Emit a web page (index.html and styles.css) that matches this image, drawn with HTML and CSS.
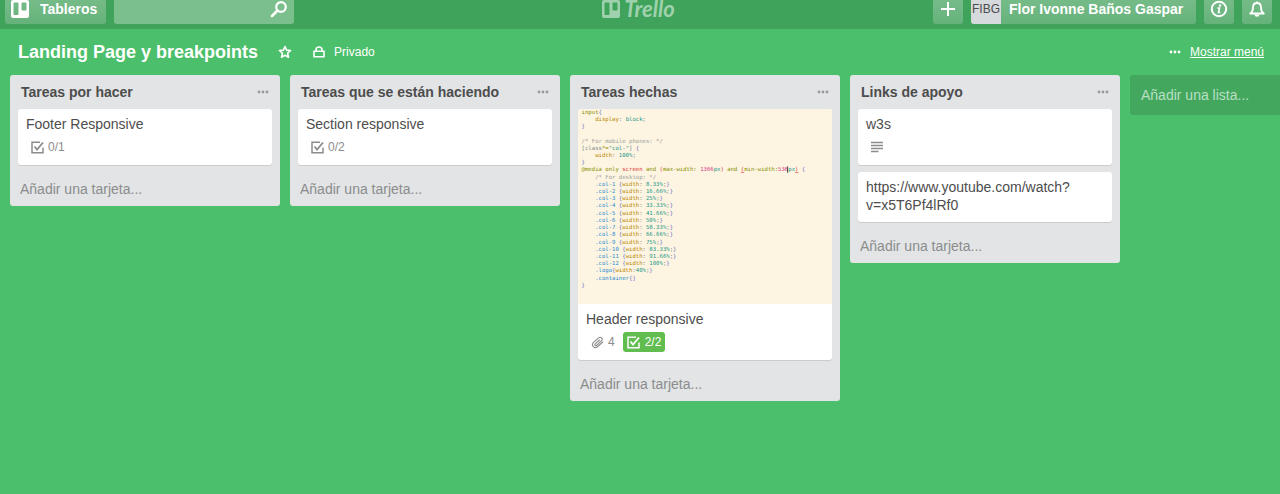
FILE: index.html
```html
<!DOCTYPE html>
<html lang="es">
<head>
<meta charset="utf-8">
<meta name="viewport" content="width=device-width, initial-scale=1">
<title>Landing Page y breakpoints | Trello</title>
<link rel="stylesheet" href="styles.css">
</head>
<body>
<svg class="symbols" aria-hidden="true">
  <symbol id="i-logo" viewBox="0 0 18 18"><path fill-rule="evenodd" d="M2 0h14a2 2 0 0 1 2 2v14a2 2 0 0 1-2 2H2a2 2 0 0 1-2-2V2a2 2 0 0 1 2-2zM3.500 2.500a1 1 0 0 0-1 1v10.500a1 1 0 0 0 1 1h3a1 1 0 0 0 1-1V3.500a1 1 0 0 0-1-1zM11.500 2.500a1 1 0 0 0-1 1v6a1 1 0 0 0 1 1h3a1 1 0 0 0 1-1v-6a1 1 0 0 0-1-1z"/></symbol>
  <symbol id="i-check" viewBox="0 0 13 13"><path d="M9 1.200H1v10.600h11V6.500" fill="none" stroke="currentColor" stroke-width="1.500"/><path d="M3.500 5.500 6 8.500 12 1.500" fill="none" stroke="currentColor" stroke-width="1.800"/></symbol>
  <symbol id="i-more" viewBox="0 0 12 4"><circle cx="2" cy="2" r="1.400"/><circle cx="6" cy="2" r="1.400"/><circle cx="10" cy="2" r="1.400"/></symbol>
</svg>

<header class="topbar">
  <div class="topbar-group">
    <button class="top-button boards-button" type="button"><svg class="icon-18" aria-hidden="true"><use href="#i-logo"/></svg>Tableros</button>
    <label class="search">
      <input class="search-input" type="text" aria-label="Buscar">
      <svg class="icon-18" viewBox="0 0 18 18" aria-hidden="true"><circle cx="11" cy="7" r="4.800" fill="none" stroke="currentColor" stroke-width="2.200"/><path d="M7.500 10.500 2 16" fill="none" stroke="currentColor" stroke-width="2.600" stroke-linecap="round"/></svg>
    </label>
  </div>
  <a class="brand" href="#"><svg class="icon-18" aria-hidden="true"><use href="#i-logo"/></svg><span>Trello</span></a>
  <div class="topbar-group topbar-right">
    <button class="top-button square" type="button" aria-label="Crear"><svg class="icon-18" viewBox="0 0 18 18" aria-hidden="true"><path d="M9 2v14M2 9h14" stroke="currentColor" stroke-width="2"/></svg></button>
    <button class="top-button member" type="button"><span class="avatar">FIBG</span><span class="member-name">Flor Ivonne Baños Gaspar</span></button>
    <button class="top-button square" type="button" aria-label="Información"><svg class="icon-18" viewBox="0 0 18 18" aria-hidden="true"><circle cx="9" cy="9" r="7.200" fill="none" stroke="currentColor" stroke-width="2"/><circle cx="10" cy="5.500" r="1.200" fill="currentColor"/><path d="M7.500 8h2l-1 4.500h1.800" fill="none" stroke="currentColor" stroke-width="1.600"/></svg></button>
    <button class="top-button square" type="button" aria-label="Notificaciones"><svg class="icon-18" viewBox="0 0 18 18" aria-hidden="true"><path d="M9 1.500v1.500M9 3C6.200 3 5 5 5 7.500 5 11 3.800 12.500 2.200 13.500h13.600C14.200 12.500 13 11 13 7.500 13 5 11.800 3 9 3z" fill="none" stroke="currentColor" stroke-width="1.800" stroke-linejoin="round"/><path d="M6.500 14.500a2.500 2.300 0 0 0 5 0z" fill="currentColor"/></svg></button>
  </div>
</header>

<main>
  <div class="board-header">
    <h1 class="board-title">Landing Page y breakpoints</h1>
    <button class="board-button star" type="button" aria-label="Marcar como favorito"><svg class="icon-14" viewBox="0 0 14 14" aria-hidden="true"><path d="m7 1.500 1.600 3.600 4 .4-3 2.700.9 4L7 10.200l-3.500 2 .9-4-3-2.700 4-.4z" fill="none" stroke="currentColor" stroke-width="1.600" stroke-linejoin="round"/></svg></button>
    <button class="board-button privacy" type="button"><svg class="icon-14" viewBox="0 0 14 14" aria-hidden="true"><path d="M2 6.200h10v5.600H2zM4 6V4.800a3 2.800 0 0 1 6 0V6" fill="none" stroke="currentColor" stroke-width="1.600"/></svg>Privado</button>
    <a class="board-button menu-link" href="#"><svg class="icon-more" aria-hidden="true"><use href="#i-more"/></svg><span>Mostrar menú</span></a>
  </div>

  <div class="lists">
    <section class="list">
      <header class="list-header"><h2>Tareas por hacer</h2><button class="list-menu" type="button" aria-label="Acciones de la lista"><svg class="icon-more" aria-hidden="true"><use href="#i-more"/></svg></button></header>
      <div class="cards">
        <article class="card"><p>Footer Responsive</p>
          <div class="badges"><span class="badge"><svg class="icon-13" aria-hidden="true"><use href="#i-check"/></svg>0/1</span></div>
        </article>
      </div>
      <button class="add-card" type="button">Añadir una tarjeta...</button>
    </section>

    <section class="list">
      <header class="list-header"><h2>Tareas que se están haciendo</h2><button class="list-menu" type="button" aria-label="Acciones de la lista"><svg class="icon-more" aria-hidden="true"><use href="#i-more"/></svg></button></header>
      <div class="cards">
        <article class="card"><p>Section responsive</p>
          <div class="badges"><span class="badge"><svg class="icon-13" aria-hidden="true"><use href="#i-check"/></svg>0/2</span></div>
        </article>
      </div>
      <button class="add-card" type="button">Añadir una tarjeta...</button>
    </section>

    <section class="list">
      <header class="list-header"><h2>Tareas hechas</h2><button class="list-menu" type="button" aria-label="Acciones de la lista"><svg class="icon-more" aria-hidden="true"><use href="#i-more"/></svg></button></header>
      <div class="cards">
        <article class="card">
          <svg class="cover" viewBox="0 0 1127 866" role="img" aria-label="Código CSS">
            <text x="16" y="21"><tspan class="c-green">input</tspan><tspan class="c-violet">{</tspan></text>
            <text x="76" y="53"><tspan class="c-gold">display</tspan>: <tspan class="c-cyan">block</tspan>;</text>
            <text x="16" y="85" class="c-violet">}</text>
            <text x="16" y="149" class="c-gray">/* For mobile phones: */</text>
            <text x="16" y="181">[class<tspan class="c-green">*=</tspan><tspan class="c-cyan">"col-"</tspan>] <tspan class="c-violet">{</tspan></text>
            <text x="76" y="213"><tspan class="c-gold">width</tspan>: <tspan class="c-cyan">100%</tspan>;</text>
            <text x="16" y="245" class="c-violet">}</text>
            <text x="16" y="277" class="c-green">@media only <tspan class="c-red">screen</tspan> and <tspan class="c-red">(</tspan>max-width: <tspan class="c-pink">1366</tspan><tspan class="c-cyan">px</tspan><tspan class="c-red">)</tspan> and <tspan class="c-red underline">(</tspan>min-width:<tspan class="c-pink">536</tspan><tspan class="c-cyan">px</tspan><tspan class="c-red underline">)</tspan> <tspan class="c-violet">{</tspan></text>
            <path d="M930 255v28" stroke="#333" stroke-width="4"/>
            <text x="76" y="309" class="c-gray">/* For desktop: */</text>
            <text x="76" y="341"><tspan class="c-blue">.col-1</tspan> <tspan class="c-violet">{</tspan><tspan class="c-gold">width</tspan>: <tspan class="c-cyan">8.33%</tspan>;<tspan class="c-violet">}</tspan></text>
            <text x="76" y="373"><tspan class="c-blue">.col-2</tspan> <tspan class="c-violet">{</tspan><tspan class="c-gold">width</tspan>: <tspan class="c-cyan">16.66%</tspan>;<tspan class="c-violet">}</tspan></text>
            <text x="76" y="405"><tspan class="c-blue">.col-3</tspan> <tspan class="c-violet">{</tspan><tspan class="c-gold">width</tspan>: <tspan class="c-cyan">25%</tspan>;<tspan class="c-violet">}</tspan></text>
            <text x="76" y="437"><tspan class="c-blue">.col-4</tspan> <tspan class="c-violet">{</tspan><tspan class="c-gold">width</tspan>: <tspan class="c-cyan">33.33%</tspan>;<tspan class="c-violet">}</tspan></text>
            <text x="76" y="469"><tspan class="c-blue">.col-5</tspan> <tspan class="c-violet">{</tspan><tspan class="c-gold">width</tspan>: <tspan class="c-cyan">41.66%</tspan>;<tspan class="c-violet">}</tspan></text>
            <text x="76" y="501"><tspan class="c-blue">.col-6</tspan> <tspan class="c-violet">{</tspan><tspan class="c-gold">width</tspan>: <tspan class="c-cyan">50%</tspan>;<tspan class="c-violet">}</tspan></text>
            <text x="76" y="533"><tspan class="c-blue">.col-7</tspan> <tspan class="c-violet">{</tspan><tspan class="c-gold">width</tspan>: <tspan class="c-cyan">58.33%</tspan>;<tspan class="c-violet">}</tspan></text>
            <text x="76" y="565"><tspan class="c-blue">.col-8</tspan> <tspan class="c-violet">{</tspan><tspan class="c-gold">width</tspan>: <tspan class="c-cyan">66.66%</tspan>;<tspan class="c-violet">}</tspan></text>
            <text x="76" y="597"><tspan class="c-blue">.col-9</tspan> <tspan class="c-violet">{</tspan><tspan class="c-gold">width</tspan>: <tspan class="c-cyan">75%</tspan>;<tspan class="c-violet">}</tspan></text>
            <text x="76" y="629"><tspan class="c-blue">.col-10</tspan> <tspan class="c-violet">{</tspan><tspan class="c-gold">width</tspan>: <tspan class="c-cyan">83.33%</tspan>;<tspan class="c-violet">}</tspan></text>
            <text x="76" y="661"><tspan class="c-blue">.col-11</tspan> <tspan class="c-violet">{</tspan><tspan class="c-gold">width</tspan>: <tspan class="c-cyan">91.66%</tspan>;<tspan class="c-violet">}</tspan></text>
            <text x="76" y="693"><tspan class="c-blue">.col-12</tspan> <tspan class="c-violet">{</tspan><tspan class="c-gold">width</tspan>: <tspan class="c-cyan">100%</tspan>;<tspan class="c-violet">}</tspan></text>
            <text x="76" y="725"><tspan class="c-blue">.logo</tspan><tspan class="c-violet">{</tspan><tspan class="c-gold">width</tspan>:<tspan class="c-cyan">40%</tspan>;<tspan class="c-violet">}</tspan></text>
            <text x="76" y="757"><tspan class="c-blue">.container</tspan><tspan class="c-violet">{}</tspan></text>
            <text x="16" y="789" class="c-violet">}</text>
          </svg>
          <p>Header responsive</p>
          <div class="badges">
            <span class="badge"><svg class="icon-13" viewBox="0 0 13 13" aria-hidden="true"><path d="M8.500 4 4.200 7.800a1 1 0 0 0 1.400 1.500l4.800-4.400a2 2 0 0 0-2.800-3L2.200 6.600a3 3 0 0 0 4 4.400L11.800 6" fill="none" stroke="currentColor" stroke-width="1.100" stroke-linecap="round"/></svg>4</span>
            <span class="badge badge-done"><svg class="icon-13" aria-hidden="true"><use href="#i-check"/></svg>2/2</span>
          </div>
        </article>
      </div>
      <button class="add-card" type="button">Añadir una tarjeta...</button>
    </section>

    <section class="list">
      <header class="list-header"><h2>Links de apoyo</h2><button class="list-menu" type="button" aria-label="Acciones de la lista"><svg class="icon-more" aria-hidden="true"><use href="#i-more"/></svg></button></header>
      <div class="cards">
        <article class="card"><p>w3s</p>
          <div class="badges"><span class="badge"><svg class="icon-13" viewBox="0 0 13 13" aria-hidden="true"><path d="M0 1.500h12M0 4.500h12M0 7.500h12M0 10.500h7.500" stroke="currentColor" stroke-width="1.600"/></svg></span></div>
        </article>
        <article class="card"><p>https://www.youtube.com/watch?v=x5T6Pf4lRf0</p></article>
      </div>
      <button class="add-card" type="button">Añadir una tarjeta...</button>
    </section>

    <button class="add-list" type="button">Añadir una lista...</button>
  </div>
</main>
</body>
</html>
```

FILE: styles.css
```css
* { box-sizing: border-box; }

body {
  margin: 0;
  min-height: 100vh;
  background: #4bbf6b;
  color: #4d4d4d;
  font: 14px/18px "Liberation Sans", Arial, sans-serif;
}

button, input { font: inherit; color: inherit; }
button { border: 0; padding: 0; background: none; cursor: pointer; }
h1, h2, p { margin: 0; }
svg { display: block; flex: none; fill: currentColor; }

.symbols { display: none; }
.icon-18 { width: 18px; height: 18px; }
.icon-14 { width: 14px; height: 14px; }
.icon-13 { width: 13px; height: 13px; }
.icon-more { width: 12px; height: 4px; }

/* Top bar */
.topbar {
  display: grid;
  grid-template-columns: 1fr auto 1fr;
  align-items: start;
  height: 29px;
  padding: 0 8px 0 5px;
  background: #40a35b;
  color: #fff;
}
.topbar-group { display: flex; gap: 8px; }
.topbar-right { justify-content: flex-end; }
.top-button {
  display: flex;
  align-items: center;
  height: 24px;
  padding-bottom: 6px;
  border-radius: 0 0 3px 3px;
  background: linear-gradient(#75bb88, #66b27b);
  font-weight: bold;
  white-space: nowrap;
}
.boards-button { gap: 11px; padding-left: 6px; padding-right: 9px; }
.square { width: 30px; justify-content: center; }
.search {
  display: flex;
  align-items: center;
  width: 180px;
  height: 24px;
  padding: 0 6px 6px;
  border-radius: 0 0 3px 3px;
  background: #7abf8c;
}
.search-input {
  flex: 1;
  min-width: 0;
  height: 18px;
  padding: 0;
  border: 0;
  outline: 0;
  background: none;
}
.brand {
  display: flex;
  align-items: center;
  gap: 4px;
  height: 18px;
  color: #9fd1ad;
  font: italic bold 22px/20px Lato, sans-serif;
  text-decoration: none;
}
.member { min-width: 225px; }
.avatar {
  height: 24px;
  width: 30px;
  margin-bottom: -6px;
  background: #d6dadc;
  border-radius: 0 0 0 3px;
  color: #4d4d4d;
  font-size: 12px;
  font-weight: normal;
  line-height: 18px;
  text-align: center;
}
.member-name { padding: 0 7px 0 8px; }

/* Board header */
.board-header {
  display: flex;
  align-items: center;
  height: 46px;
  padding: 0 16px 0 18px;
  color: #fff;
}
.board-title { font-size: 18px; line-height: 24px; }
.board-button { display: flex; align-items: center; color: #fff; font-size: 12px; }
.star { margin-left: 20px; }
.privacy { gap: 8px; margin-left: 20px; }
.menu-link { gap: 9px; margin-left: auto; text-decoration: none; }
.menu-link span { text-decoration: underline; }

/* Lists */
.lists {
  display: flex;
  align-items: flex-start;
  gap: 10px;
  padding: 0 0 10px 10px;
  overflow: hidden;
}
.list { flex: none; width: 270px; border-radius: 3px; background: #e2e4e6; }
.list-header {
  display: flex;
  align-items: center;
  justify-content: space-between;
  height: 34px;
  padding: 0 11px;
}
.list-header h2 { font-size: 14px; line-height: 18px; }
.list-menu { color: #999; }
.cards { display: grid; gap: 7px; padding: 0 8px; }
.card {
  overflow: hidden;
  padding-bottom: 8px;
  border-radius: 3px;
  background: #fff;
  box-shadow: 0 1px 0 #ccc;
}
.card p { padding: 6px 8px 0; overflow-wrap: break-word; }
.badges { display: flex; gap: 4px; padding: 4px 8px 0 9px; }
.badge {
  display: flex;
  align-items: center;
  gap: 4px;
  height: 20px;
  padding: 0 4px;
  border-radius: 3px;
  color: #8c8c8c;
  font-size: 12px;
}
.badge-done { gap: 5px; background: #61bd4f; color: #fff; }
.add-card {
  display: block;
  width: 100%;
  padding: 15px 10px 8px;
  color: #8c8c8c;
  text-align: left;
}
.add-list {
  flex: 1 0 150px;
  max-width: 270px;
  height: 40px;
  padding: 0 11px;
  border-radius: 3px 0 0 3px;
  background: #43a85e;
  color: #b9dfc3;
  text-align: left;
}

/* Code shown on the card cover */
.cover {
  width: 100%;
  background: #fdf4e1;
  fill: #76888b;
  font: 25px "DejaVu Sans Mono", monospace;
}
.c-green { fill: #859000; }
.c-violet { fill: #7478c8; }
.c-gold { fill: #b58600; }
.c-cyan { fill: #22988a; }
.c-gray { fill: #98a29c; }
.c-red { fill: #dc322f; }
.c-pink { fill: #d33682; }
.c-blue { fill: #268bd2; }
.underline { text-decoration: underline; }
```
